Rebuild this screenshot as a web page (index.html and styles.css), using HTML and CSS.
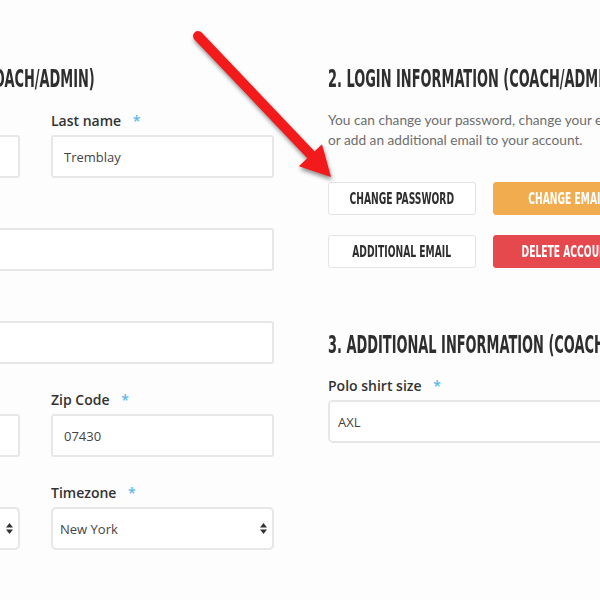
FILE: index.html
```html
<!DOCTYPE html>
<html lang="en">
<head>
    <meta charset="UTF-8">
    <meta name="viewport" content="width=device-width, initial-scale=1.0">
    <title>Account</title>
    <link rel="stylesheet" href="styles.css">
</head>
<body>
    <div class="page">
        <section class="panel">
            <h2 class="title"><span>1. CLIENT INFORMATION (COACH/ADMIN)</span></h2>
            <div class="fields">
                <div class="field">
                    <label for="firstName">First name <i>*</i></label>
                    <input type="text" id="firstName" value="Marc">
                </div>
                <div class="field">
                    <label for="lastName">Last name <i>*</i></label>
                    <input type="text" id="lastName" value="Tremblay">
                </div>
                <div class="field wide">
                    <label for="address">Address <i>*</i></label>
                    <input type="text" id="address" value="">
                </div>
                <div class="field wide">
                    <label for="address2">Address line 2</label>
                    <input type="text" id="address2" value="">
                </div>
                <div class="field">
                    <label for="city">City <i>*</i></label>
                    <input type="text" id="city" value="Paramus">
                </div>
                <div class="field">
                    <label for="zip">Zip Code <i>*</i></label>
                    <input type="text" id="zip" value="07430">
                </div>
                <div class="field">
                    <label for="state">State <i>*</i></label>
                    <div class="select-wrap">
                        <select id="state"><option>New Jersey</option></select>
                        <svg class="updown" viewBox="0 0 7 11"><polygon points="0,4.5 3.5,0 7,4.5"/><polygon points="0,6.5 7,6.5 3.5,11"/></svg>
                    </div>
                </div>
                <div class="field">
                    <label for="timezone">Timezone <i>*</i></label>
                    <div class="select-wrap">
                        <select id="timezone"><option>New York</option></select>
                        <svg class="updown" viewBox="0 0 7 11"><polygon points="0,4.5 3.5,0 7,4.5"/><polygon points="0,6.5 7,6.5 3.5,11"/></svg>
                    </div>
                </div>
            </div>
        </section>

        <section class="panel">
            <h2 class="title"><span>2. LOGIN INFORMATION (COACH/ADMIN)</span></h2>
            <p class="intro">You can change your password, change your email address<br>or add an additional email to your account.</p>
            <div class="actions">
                <button class="btn"><span>CHANGE PASSWORD</span></button>
                <button class="btn warn"><span>CHANGE EMAIL</span></button>
                <button class="btn"><span>ADDITIONAL EMAIL</span></button>
                <button class="btn danger"><span>DELETE ACCOUNT</span></button>
            </div>

            <h2 class="title"><span>3. ADDITIONAL INFORMATION (COACH/ADMIN)</span></h2>
            <div class="field">
                <label for="polo">Polo shirt size <i>*</i></label>
                <div class="select-wrap">
                    <select id="polo" class="round"><option>AXL</option></select>
                    <svg class="updown" viewBox="0 0 7 11"><polygon points="0,4.5 3.5,0 7,4.5"/><polygon points="0,6.5 7,6.5 3.5,11"/></svg>
                </div>
            </div>
        </section>
    </div>

    <!-- callout arrow drawn over the page -->
    <svg class="callout" viewBox="0 0 600 600">
        <line x1="198" y1="36" x2="314" y2="158" stroke="#f21a1a" stroke-width="10" stroke-linecap="round"/>
        <polygon points="298.8,166.2 322,144.2 331,177" fill="#f21a1a"/>
    </svg>
</body>
</html>
```

FILE: styles.css
```css
* {
    box-sizing: border-box;
    margin: 0;
    padding: 0;
}
body {
    background-color: #fdfdfd;
    overflow: hidden;
    font-family: "Open Sans", sans-serif;
    color: #333;
}
.page {
    display: flex;
    gap: 54px;
    margin-left: -203px;
    padding-top: 64px;
}
.panel {
    width: 477px;
    flex-shrink: 0;
}
.title {
    font-family: "DejaVu Sans Condensed", "DejaVu Sans", sans-serif;
    font-weight: bold;
    font-size: 24px;
    line-height: 30px;
    color: #2e2e2e;
    white-space: nowrap;
    margin-bottom: 16px;
}
.title span {
    display: inline-block;
    transform: scaleX(0.6);
    transform-origin: left;
}
.fields {
    display: grid;
    grid-template-columns: 223px 223px;
    column-gap: 31px;
    row-gap: 25px;
}
.wide {
    grid-column: span 2;
}
label {
    display: block;
    font-weight: 600;
    font-size: 14px;
    line-height: 20px;
    margin-top: 1px;
    margin-bottom: 4px;
    color: #333;
}
label i {
    font-style: normal;
    color: #5bb8ea;
    margin-left: 8px;
}
input,
select {
    display: block;
    width: 100%;
    height: 43px;
    border: 2px solid #e7e7e7;
    border-radius: 3px;
    background-color: #fff;
    font-family: "Open Sans", sans-serif;
    font-size: 13px;
    color: #444;
    padding: 0 11px;
    outline: none;
}
select {
    appearance: none;
    -webkit-appearance: none;
    border-radius: 5px;
    padding: 0 7px;
}
select.round {
    padding: 0 8px;
}
.select-wrap {
    position: relative;
}
.updown {
    position: absolute;
    right: 7px;
    top: 16px;
    width: 7px;
    height: 11px;
    fill: #333;
}
.intro {
    font-family: "Lato", sans-serif;
    font-size: 13.7px;
    line-height: 20px;
    color: #6e6e6e;
    white-space: nowrap;
    margin-bottom: 32px;
}
.actions {
    display: grid;
    grid-template-columns: 148px 148px;
    column-gap: 17px;
    row-gap: 20px;
    margin-bottom: 62px;
}
.btn {
    display: flex;
    align-items: center;
    justify-content: center;
    height: 33px;
    border: 1px solid #e4e4e4;
    border-radius: 3px;
    background-color: #fff;
    color: #2e2e2e;
    font-family: "DejaVu Sans Condensed", "DejaVu Sans", sans-serif;
    font-weight: bold;
    font-size: 15px;
    white-space: nowrap;
    cursor: pointer;
}
.btn span {
    display: inline-block;
    transform: scaleX(0.68);
}
.warn {
    background-color: #f0ac4e;
    border-color: #f0ac4e;
    color: #fff;
}
.danger {
    background-color: #e5484d;
    border-color: #e5484d;
    color: #fff;
}
.callout {
    position: absolute;
    top: 0;
    left: 0;
    width: 600px;
    height: 600px;
    pointer-events: none;
    filter: drop-shadow(1px 3px 2px rgba(0, 0, 0, 0.45));
}
```
